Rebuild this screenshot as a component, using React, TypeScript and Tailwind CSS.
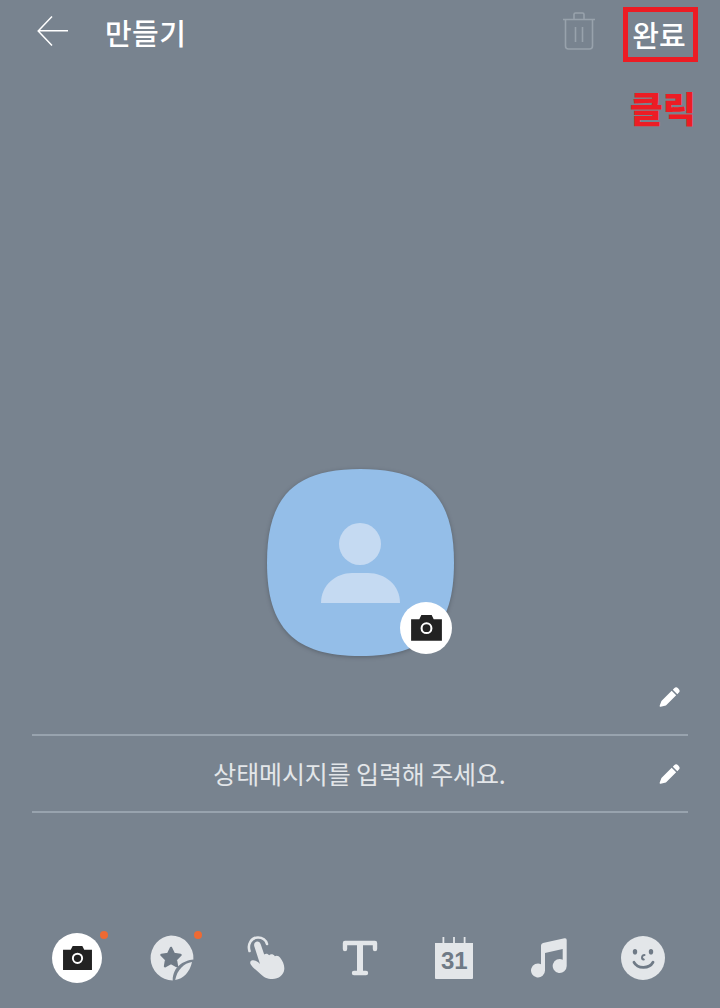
import React from "react";

const KR = "font-['Noto_Sans_CJK_KR','Noto_Sans',sans-serif]";

const CameraGlyph = ({ size }: { size: number }) => (
  <svg width={size} height={size * 0.84} viewBox="0 0 32 27">
    <path
      fill="#222222"
      fillRule="evenodd"
      d="M1 5h8l2-4h10l2 4h8v21H1zM16 8a5.8 5.8 0 1 0 0 11.6A5.8 5.8 0 0 0 16 8zm0 2a3.8 3.8 0 1 1 0 7.6 3.8 3.8 0 0 1 0-7.6z"
    />
  </svg>
);

const Pencil = () => (
  <svg width="24" height="23" viewBox="0 0 22 22">
    <path
      fill="#ffffff"
      d="M15 3.2a2.6 2.6 0 0 1 3.7 0l.6.6a2.6 2.6 0 0 1 0 3.7l-1.3 1.3-4.3-4.3zM12.6 5.6l4.3 4.3-9.8 9.8-5 1.1a.8.8 0 0 1-1-1l1.7-4.4z"
    />
  </svg>
);

const Avatar = () => (
  <div className="relative w-[187px] h-[187px]">
    <svg width="187" height="187" viewBox="0 0 187 187" className="drop-shadow-[0_1px_2px_rgba(50,60,70,0.45)]">
      <path
        fill="#94bee8"
        d="M93.5 0C159.5 0 187 27.5 187 93.5C187 159.5 159.5 187 93.5 187C27.5 187 0 159.5 0 93.5C0 27.5 27.5 0 93.5 0Z"
      />
      <circle cx="93" cy="75" r="21" fill="#c5daf2" />
      <path fill="#c5daf2" d="M54 134C54 116 69 104 85 104H101C118 104 133 116 133 134Z" />
    </svg>
    <div className="absolute left-[133px] top-[133px] w-[52px] h-[52px] rounded-full bg-white flex items-center justify-center">
      <CameraGlyph size={33} />
    </div>
  </div>
);

const Dot = () => <span className="absolute left-[48px] top-[-2px] w-[8px] h-[8px] rounded-full bg-[#ee6a33]" />;

const ToolIcon = ({ children }: { children: React.ReactNode }) => (
  <div className="flex items-center justify-center h-[50px]">{children}</div>
);

const toolbar = [
  <div key="camera" className="relative w-[50px] h-[50px] rounded-full bg-white flex items-center justify-center">
    <CameraGlyph size={31} />
    <Dot />
  </div>,
  <div key="sticker" className="relative w-[50px] h-[50px]">
    <svg width="50" height="50" viewBox="0 0 50 50">
      <path
        fill="#e3e6e9"
        d="M25 2.500A22.500 22.500 0 0 1 47.400 26.500C38 27.500 27 33 26.700 47.400A22.500 22.500 0 0 1 25 2.500Z"
      />
      <path fill="#e3e6e9" d="M46 29C38 30 31 37 29.200 47C37 46 44 39 46 29Z" />
      <path
        fill="#6f7a86"
        stroke="#6f7a86"
        strokeWidth="2.500"
        strokeLinejoin="round"
        d="M25 15L27.900 21L34.500 21.900L29.800 26.500L30.900 33.100L25 30L19.100 33.100L20.200 26.500L15.500 21.900L22.100 21Z"
      />
    </svg>
    <Dot />
  </div>,
  <svg key="touch" width="38" height="43" viewBox="0 0 38 43" className="mb-[2px]">
    <path fill="none" stroke="#e3e6e9" strokeWidth="2.600" strokeLinecap="round" d="M2.500 15C.300 8 4.500 1.500 11 1.500c4.500 0 8 2.800 9 6.500" />
    <path
      fill="#e3e6e9"
      d="M7.200 10C6.700 7 8.500 5.500 10.300 5.500C12 5.500 13.200 6.700 13.800 8.500L17.200 18.500C18.500 17.200 21 17.300 22.200 19.300C23.500 17.800 26.500 18 27.800 20.300C29.200 19.200 32 19.600 33.200 21.800C35.800 25 37.500 29 37.300 33C37 39 31.500 43 25.500 43C20 43 16.500 41 13.500 38C10 35 6 32 3.800 28.500C2.500 26.500 3.500 24.500 5.500 24.300C8 24 10.500 25.500 13 28Z"
    />
  </svg>,
  <svg key="text" width="36" height="36" viewBox="0 0 36 36" fill="none" stroke="#e3e6e9" strokeLinecap="round" strokeLinejoin="round">
    <path strokeWidth="4.400" d="M3 9V3H33V9M12 33H24" />
    <path strokeWidth="6" d="M18 4V32" />
  </svg>,
  <div key="cal" className="relative w-[38px] h-[42px]">
    <svg width="38" height="42" viewBox="0 0 38 42">
      <path
        fill="#e3e6e9"
        d="M0 6h7.500V0h1.800v6h8.800V0h1.800v6h8.800V0h1.800v6H38V41a1 1 0 0 1-1 1H1a1 1 0 0 1-1-1z"
      />
    </svg>
    <span className="absolute left-0 right-0 top-[10px] text-center text-[24px] leading-[28px] font-bold text-[#6f7a86] font-['Liberation_Sans',sans-serif]">
      31
    </span>
  </div>,
  <svg key="music" width="38" height="40" viewBox="0 0 38 40">
    <path
      fill="#e3e6e9"
      d="M11 7.500Q11 5.500 13 5L34.500 .2Q36.700 -.2 36.700 2V28A7 7 0 1 1 32.700 21.700V11L15 15V32.500A7 7 0 1 1 11 26.200Z"
    />
  </svg>,
  <svg key="face" width="44" height="44" viewBox="0 0 44 44">
    <circle cx="22" cy="22" r="22" fill="#e3e6e9" />
    <ellipse cx="14" cy="15.700" rx="2.200" ry="2.800" fill="#6f7a86" />
    <ellipse cx="30" cy="15.700" rx="2.200" ry="2.800" fill="#6f7a86" />
    <path fill="none" stroke="#6f7a86" strokeWidth="2" strokeLinecap="round" d="M23.500 19c-2.800 0-3.500 4-.700 4.500" />
    <path fill="none" stroke="#6f7a86" strokeWidth="2.800" strokeLinecap="round" d="M13 26.300c3.500 6.500 15 7 19 0" />
  </svg>,
];

export default function App() {
  return (
    <div className={`w-[720px] h-[1008px] bg-[#78838f] overflow-hidden flex flex-col ${KR}`}>
      {/* top bar */}
      <div className="flex items-start pt-[7px] pl-[37px] pr-[22px]">
        <svg width="32" height="30" viewBox="0 0 32 30" className="mt-[9px]" fill="none" stroke="#ffffff" strokeWidth="1.500">
          <path d="M15 .5L1.200 15 15 29.500M1.200 14.800H31" />
        </svg>
        <span className="ml-[36px] mt-[3px] text-[29px] leading-[44px] font-medium text-white tracking-[0.4px]">만들기</span>
        <svg width="34" height="38" viewBox="0 0 34 38" className="ml-auto mt-[5px]" fill="none" stroke="#98a2ac" strokeWidth="1.600">
          <path d="M1 7.500H33M12 7V2.500A1.500 1.500 0 0 1 13.500 1h7A1.500 1.500 0 0 1 22 2.500V7M3.500 7.500V34a3 3 0 0 0 3 3h21a3 3 0 0 0 3-3V7.500M13.500 15v15M20.500 15v15" />
        </svg>
        <div className="ml-[27px] w-[75px] h-[55px] border-[5px] border-[#ed1c24] flex items-center justify-center">
          <span className="text-[29px] leading-[36px] font-medium text-white mr-[3px] mb-[2px]">완료</span>
        </div>
      </div>

      <div className="self-end mr-[24px] mt-[23px] text-[36px] leading-[44px] font-black text-[#ed1c24]">클릭</div>

      <div className="self-center mt-[340px] ml-[1px]">
        <Avatar />
      </div>

      {/* name + status rows */}
      <div className="mx-[32px] mt-[16px]">
        <div className="h-[64px] border-b-2 border-[#98a3ae] flex items-center justify-end pr-[6px] pb-[14px]">
          <Pencil />
        </div>
        <div className="relative h-[77px] border-b-2 border-[#98a3ae] flex items-center justify-center">
          <span className="text-[25px] leading-[34px] tracking-[-0.12px] text-[#e3e6e9] mr-[1px] mb-[2px]">상태메시지를 입력해 주세요.</span>
          <div className="absolute right-[6px] top-[26px]">
            <Pencil />
          </div>
        </div>
      </div>

      {/* bottom toolbar */}
      <div className="grid grid-cols-7 w-[660px] ml-[30px] mt-[120px]">
        {toolbar.map((item, i) => (
          <ToolIcon key={i}>{item}</ToolIcon>
        ))}
      </div>
    </div>
  );
}
